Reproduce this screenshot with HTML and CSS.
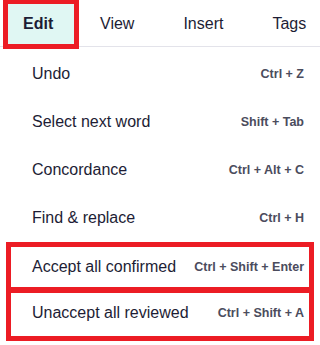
FILE: index.html
```html
<!DOCTYPE html>
<html lang="en">
<head>
<meta charset="utf-8">
<title>Edit menu</title>
<link rel="stylesheet" href="styles.css">
</head>
<body>
<div class="app">
  <nav class="tabs">
    <div class="tab tab-active">Edit</div>
    <div class="tab">View</div>
    <div class="tab">Insert</div>
    <div class="tab">Tags</div>
  </nav>
  <ul class="menu">
    <li class="item"><span class="label">Undo</span><span class="keys">Ctrl + Z</span></li>
    <li class="item"><span class="label">Select next word</span><span class="keys">Shift + Tab</span></li>
    <li class="item"><span class="label">Concordance</span><span class="keys">Ctrl + Alt + C</span></li>
    <li class="item"><span class="label">Find &amp; replace</span><span class="keys">Ctrl + H</span></li>
    <li class="item item-marked item-marked-top"><span class="label">Accept all confirmed</span><span class="keys">Ctrl + Shift + Enter</span></li>
    <li class="item item-marked item-marked-bottom"><span class="label">Unaccept all reviewed</span><span class="keys">Ctrl + Shift + A</span></li>
  </ul>
</div>
</body>
</html>
```

FILE: styles.css
```css
* {
  box-sizing: border-box;
}

html, body {
  margin: 0;
  padding: 0;
  background: #ffffff;
}

body {
  font-family: "Liberation Sans", Arial, sans-serif;
  color: #1d1d35;
}

.app {
  width: 320px;
  height: 345px;
  overflow: hidden;
}

.tabs {
  display: flex;
  align-items: flex-start;
  height: 47px;
  border-bottom: 1px solid #e3e3ea;
}

.tab {
  font-size: 16px;
  line-height: 18px;
  padding-top: 15px;
  height: 47px;
  margin-left: 49px;
}

.tab-active {
  margin-left: 3px;
  width: 76px;
  height: 49px;
  padding: 11px 0 0 15px;
  border: 5px solid #ec1c24;
  border-top-width: 4px;
  background: #e0f7f3;
  font-weight: 700;
  position: relative;
  z-index: 1;
}

.tab-active + .tab {
  margin-left: 21px;
}

.menu {
  list-style: none;
  margin: 3px 6px 0;
  padding: 0;
}

.item {
  display: flex;
  align-items: center;
  justify-content: space-between;
  height: 48px;
  padding: 0 10px 0 26px;
}

.label {
  font-size: 16px;
}

.keys {
  font-size: 12.5px;
  font-weight: 700;
  color: #4b4c5d;
}

.item-marked {
  border: 5px solid #ec1c24;
  padding: 0 5px 0 21px;
}

.item-marked-top {
  border-bottom-width: 3px;
  padding-bottom: 1px;
}

.item-marked-bottom {
  height: 51px;
  border-top-width: 3px;
  padding-bottom: 3px;
}
```
